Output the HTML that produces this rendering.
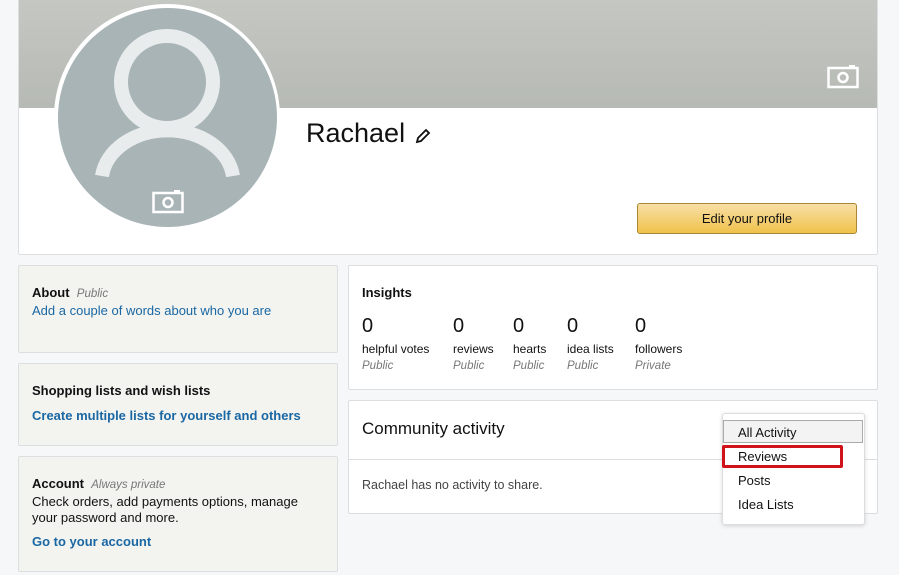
<!DOCTYPE html><html><head><style>
body{margin:0;width:899px;height:575px;background:#f6f7f9;font-family:"Liberation Sans",sans-serif;position:relative;overflow:hidden;color:#111}
.a{position:absolute}
.card{position:absolute;border:1px solid #dcdedf;border-radius:2px;box-sizing:border-box}
.l{background:#f3f4f0}
.s{font-size:13px}
.lnk{color:#1a67a3}
.i{font-style:italic;color:#777;font-size:11.5px}
</style></head><body>
<div class="card" style="left:18px;top:-1px;width:860px;height:256px;background:#fff"></div>
<div class="a" style="left:19px;top:0;width:858px;height:108px;background:linear-gradient(#c5c7c2,#b6bab4)"></div>
<svg class="a" style="left:827px;top:64px" width="32" height="26" viewBox="0 0 32 26"><rect x="1.5" y="4" width="29" height="19" fill="none" stroke="#fff" stroke-width="2.5"/><rect x="22" y="1" width="6" height="3" fill="#fff"/><circle cx="16" cy="13.5" r="4.5" fill="none" stroke="#fff" stroke-width="2.5"/></svg>
<div class="a" style="left:54px;top:4px;width:226px;height:226px;border-radius:50%;background:#fff"></div>
<div class="a" style="left:58px;top:8px;width:219px;height:219px;border-radius:50%;background:#a9b4b7;overflow:hidden">
<svg width="219" height="219"><path d="M44 168 A 66 52 0 0 1 175 168" fill="none" stroke="#e9ecec" stroke-width="14"/><circle cx="109" cy="74" r="46" fill="#a9b4b7" stroke="#e9ecec" stroke-width="14"/></svg></div>
<svg class="a" style="left:152px;top:189px" width="32" height="26" viewBox="0 0 32 26"><rect x="1.5" y="4" width="29" height="19" fill="none" stroke="#fff" stroke-width="2.5"/><rect x="22" y="1" width="6" height="3" fill="#fff"/><circle cx="16" cy="13.5" r="4.5" fill="none" stroke="#fff" stroke-width="2.5"/></svg>
<div class="a" style="left:306px;top:118px;font-size:27px">Rachael</div>
<svg class="a" style="left:414px;top:127px" width="18" height="18"><path d="M3 15 L4 11 L12 3 L15 6 L7 14 Z" fill="none" stroke="#111" stroke-width="1.8"/></svg>
<div class="a" style="left:637px;top:203px;width:220px;height:31px;box-sizing:border-box;border:1px solid #a88734;border-radius:3px;background:linear-gradient(#f7dfa5,#f0c14b);font-size:13px;text-align:center;line-height:29px">Edit your profile</div>

<div class="card l" style="left:18px;top:265px;width:320px;height:88px"></div>
<div class="a s" style="left:32px;top:285px"><b>About</b> &nbsp;<span class="i">Public</span></div>
<div class="a s lnk" style="left:32px;top:303px">Add a couple of words about who you are</div>
<div class="card l" style="left:18px;top:363px;width:320px;height:83px"></div>
<div class="a s" style="left:32px;top:383px;font-weight:bold">Shopping lists and wish lists</div>
<div class="a s lnk" style="left:32px;top:408px;font-weight:bold">Create multiple lists for yourself and others</div>
<div class="card l" style="left:18px;top:456px;width:320px;height:116px"></div>
<div class="a s" style="left:32px;top:476px"><b>Account</b> &nbsp;<span class="i">Always private</span></div>
<div class="a s" style="left:32px;top:494px;line-height:16px">Check orders, add payments options, manage<br>your password and more.</div>
<div class="a s lnk" style="left:32px;top:534px;font-weight:bold">Go to your account</div>

<div class="card" style="left:348px;top:265px;width:530px;height:125px;background:#fff"></div>
<div class="a s" style="left:362px;top:285px;font-weight:bold">Insights</div>
<div class="a" style="left:362px;top:315px;font-size:20px">0</div><div class="a" style="left:362px;top:342px;font-size:12px">helpful votes</div><div class="a i" style="left:362px;top:360px">Public</div>
<div class="a" style="left:453px;top:315px;font-size:20px">0</div><div class="a" style="left:453px;top:342px;font-size:12px">reviews</div><div class="a i" style="left:453px;top:360px">Public</div>
<div class="a" style="left:513px;top:315px;font-size:20px">0</div><div class="a" style="left:513px;top:342px;font-size:12px">hearts</div><div class="a i" style="left:513px;top:360px">Public</div>
<div class="a" style="left:567px;top:315px;font-size:20px">0</div><div class="a" style="left:567px;top:342px;font-size:12px">idea lists</div><div class="a i" style="left:567px;top:360px">Public</div>
<div class="a" style="left:635px;top:315px;font-size:20px">0</div><div class="a" style="left:635px;top:342px;font-size:12px">followers</div><div class="a i" style="left:635px;top:360px">Private</div>

<div class="card" style="left:348px;top:400px;width:530px;height:114px;background:#fff"></div>
<div class="a" style="left:362px;top:419px;font-size:17px">Community activity</div>
<div class="a" style="left:349px;top:459px;width:528px;height:1px;background:#ddd"></div>
<div class="a" style="left:362px;top:478px;font-size:12.5px;color:#444">Rachael has no activity to share.</div>
<div class="a" style="left:722px;top:413px;width:143px;height:112px;background:#fff;border:1px solid #ddd;border-radius:3px;box-shadow:0 1px 4px rgba(0,0,0,.15);box-sizing:border-box"></div>
<div class="a" style="left:723px;top:420px;width:140px;height:23px;background:#f3f3f3;border:1px solid #aaa;box-sizing:border-box"></div>
<div class="a s" style="left:738px;top:425px">All Activity</div>
<div class="a" style="left:722px;top:445px;width:121px;height:23px;border:3px solid #d0121b;box-sizing:border-box;border-radius:2px"></div>
<div class="a s" style="left:738px;top:449px">Reviews</div>
<div class="a s" style="left:738px;top:473px">Posts</div>
<div class="a s" style="left:738px;top:497px">Idea Lists</div>
</body></html>
